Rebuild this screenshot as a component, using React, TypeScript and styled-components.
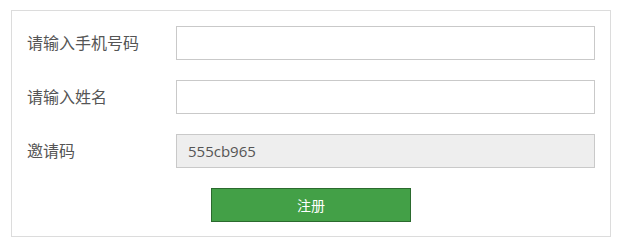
import React from "react";
import styled, { createGlobalStyle } from "styled-components";

const Global = createGlobalStyle`
  html, body { margin: 0; padding: 0; background: #fff; }
  body { font-family: "Open Sans", "Noto Sans CJK SC", sans-serif; }
  * { box-sizing: border-box; }
`;

const Panel = styled.form`
  margin: 10px 0 0 11px;
  width: 600px;
  border: 1px solid #dcdcdc;
  padding: 15px 15px 14px 15px;
  display: flex;
  flex-direction: column;
  gap: 20px;
`;

const Row = styled.div`
  display: flex;
  align-items: center;
  height: 34px;
`;

const Label = styled.label`
  width: 149px;
  flex: none;
  font-family: "Noto Sans CJK SC", sans-serif;
  font-size: 16px;
  color: #555;
  line-height: 20px;
  margin-top: -3px;
`;

const Input = styled.input<{ $disabled?: boolean }>`
  flex: 1;
  height: 34px;
  border: 1px solid #c9c9c9;
  background: ${(p) => (p.$disabled ? "#eeeeee" : "#fff")};
  padding: 0 11px;
  font-family: "Open Sans", "Noto Sans CJK SC", sans-serif;
  font-size: 15px;
  color: #555;
  outline: none;
  margin: 0;
`;

const ButtonRow = styled.div`
  display: flex;
  padding-left: 184px;
`;

const Submit = styled.button`
  width: 200px;
  height: 34px;
  background: #43a047;
  border: 1px solid #2b6a2e;
  color: #fff;
  font-family: "Noto Sans CJK SC", sans-serif;
  font-size: 14px;
  padding: 0;
  cursor: pointer;
`;

export default function App() {
  return (
    <>
      <Global />
      <Panel onSubmit={(e) => e.preventDefault()}>
        <Row>
          <Label>请输入手机号码</Label>
          <Input type="text" />
        </Row>
        <Row>
          <Label>请输入姓名</Label>
          <Input type="text" />
        </Row>
        <Row>
          <Label>邀请码</Label>
          <Input type="text" $disabled readOnly defaultValue="555cb965" />
        </Row>
        <ButtonRow>
          <Submit type="submit">注册</Submit>
        </ButtonRow>
      </Panel>
    </>
  );
}
